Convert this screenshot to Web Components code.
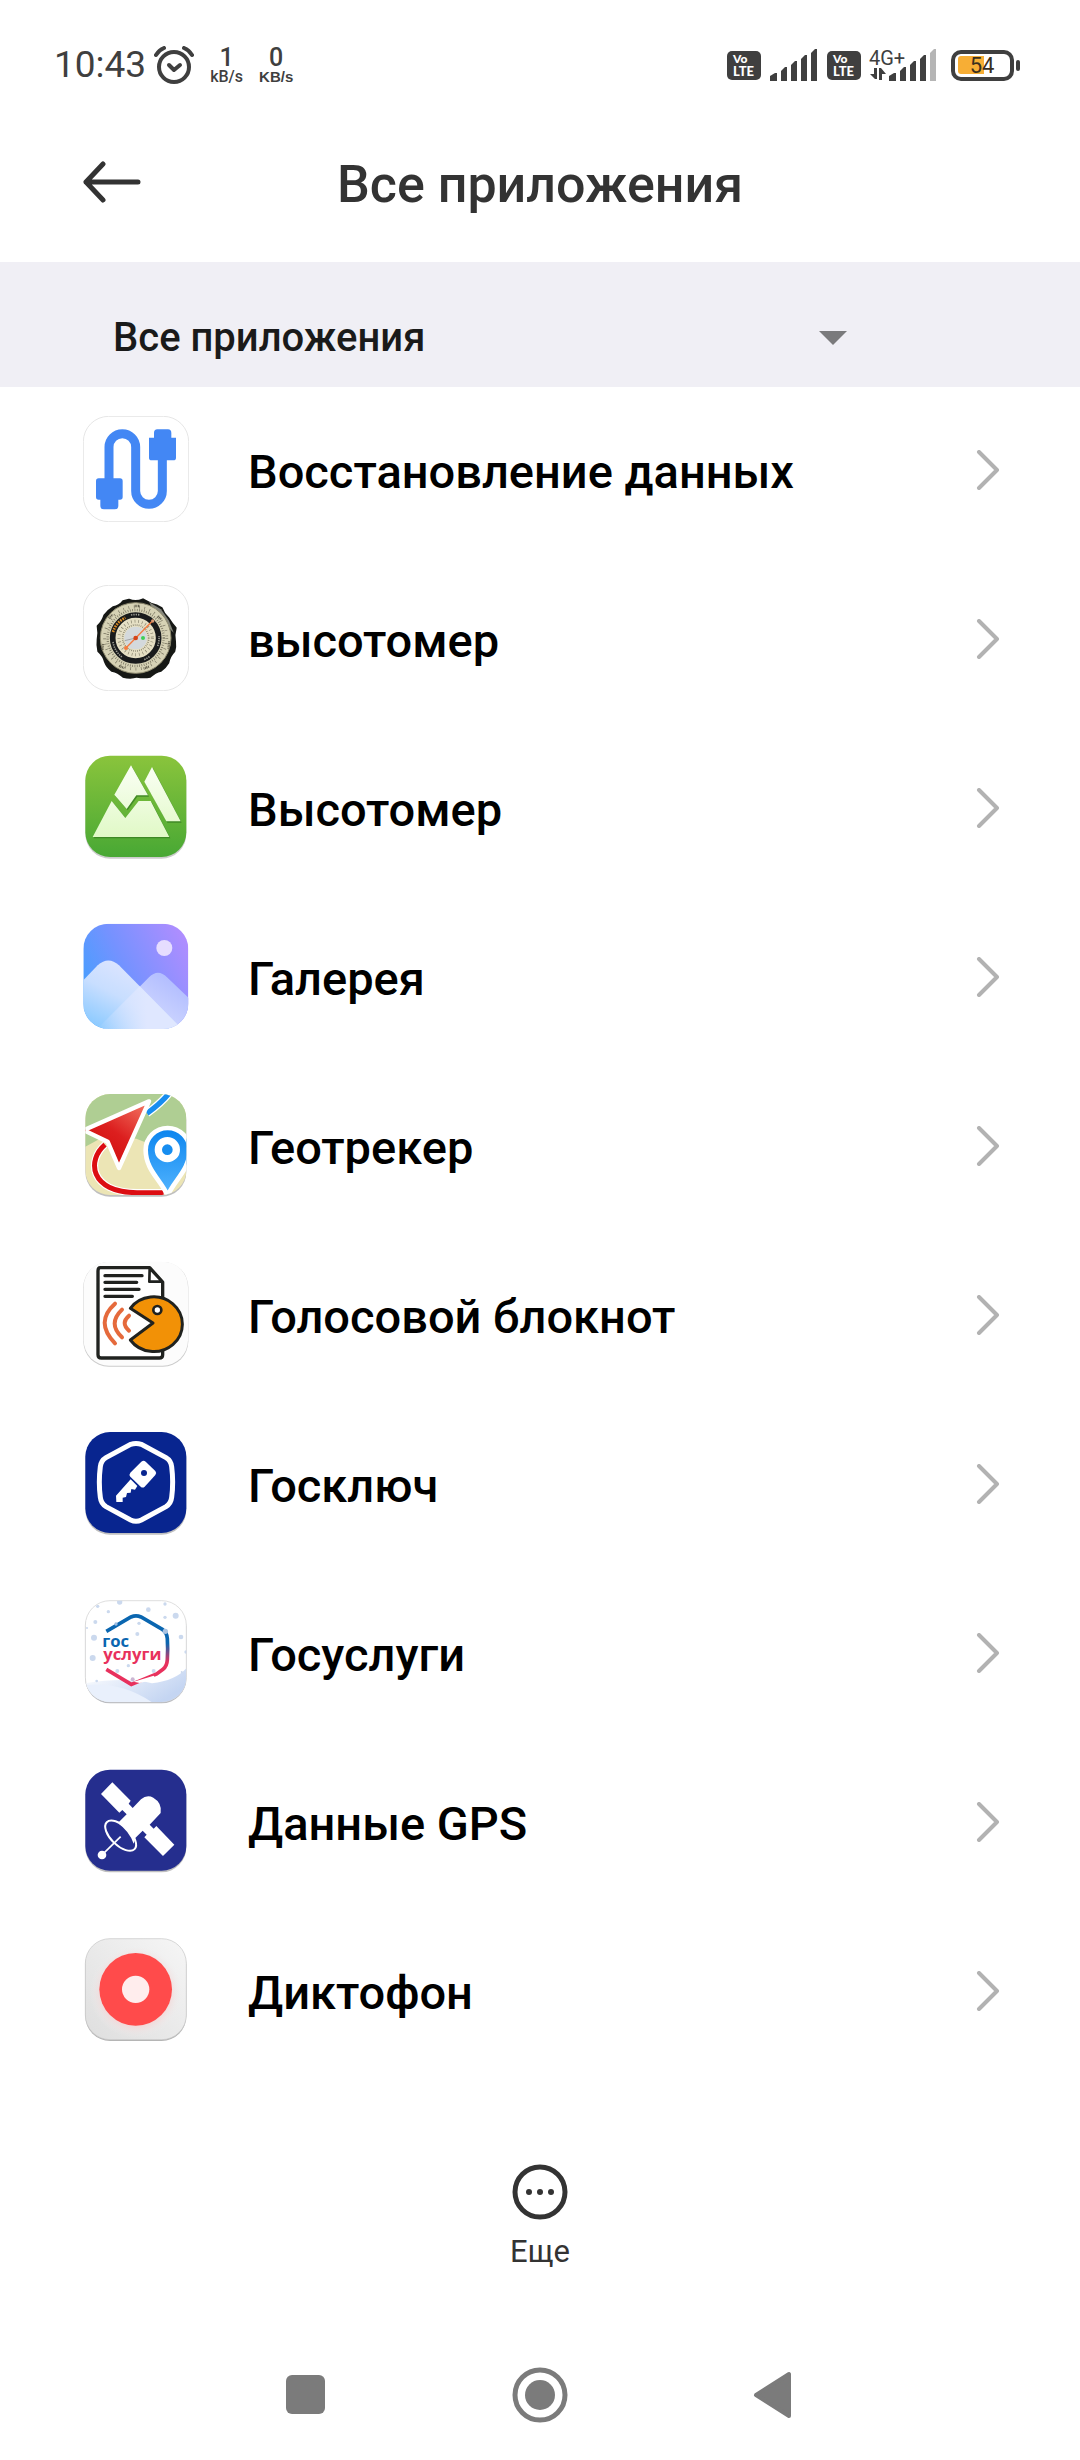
<!DOCTYPE html>
<html lang="ru">
<head>
<meta charset="UTF-8">
<meta name="viewport" content="width=device-width, initial-scale=1">
<title>Все приложения</title>
<style>
    body {
        margin: 0;
        background-color: #fff;
        font-family: Roboto, "Noto Sans", sans-serif;
    }
</style>
</head>
<body>

<app-screen>
    <status-bar slot="top" time="10:43"></status-bar>
    <page-header slot="top">Все приложения</page-header>
    <filter-bar slot="top"></filter-bar>

    <app-item>
        <svg slot="icon" viewBox="38 48 318 318" aria-hidden="true">
            <rect x="39" y="49" width="316" height="316" rx="76" fill="#fff" stroke="#e6e6e6" stroke-width="3"/>
            <path d="M116 240V141a40 40 0 0 1 80 0V273a40 40 0 0 0 80 0V175" fill="none" stroke="#4387f4" stroke-width="27"/>
            <path d="M85 235h64q8 0 8 8v48q0 8-8 8h-5v18q0 11-11 11h-32q-11 0-11-11v-18h-5q-8 0-8-8v-48q0-8 8-8z" fill="#4387f4"/>
            <path d="M261 88h32q10 0 10 11v14h14v60q0 8-8 8h-65q-8 0-8-8v-60h15v-14q0-11 10-11z" fill="#4387f4"/>
        </svg>
        Восстановление данных
    </app-item>

    <app-item>
        <svg slot="icon" viewBox="38 555 318 318" aria-hidden="true">
            <rect x="39" y="556" width="316" height="316" rx="76" fill="#fff" stroke="#e6e6e6" stroke-width="3"/>
            <path d="M176 599q20 8 42-1l24 13q18 4 32 13 6 18 20 30 10 16 22 30-6 20-2 40 2 16-2 30-14 14-18 34-10 16-22 24-18 4-32 18-20 4-40 0-20 6-42 0-14-14-34-18-14-10-20-26-4-18-20-32-4-20-2-36 4-20 0-40 14-12 20-32 10-14 26-24 20-4 30-18z" fill="#161815" stroke="#161815" stroke-width="6" stroke-linejoin="round"/>
            <path d="M236 606l36 22 24 34 14 36-30-30-26-30z" fill="#85867c"/>
            <circle cx="196" cy="714" r="106" fill="#d6d2b5" stroke="#8d896e" stroke-width="3"/>
            <circle cx="196" cy="714" r="93" fill="none" stroke="#77735f" stroke-width="9" stroke-dasharray="2 14"/>
            <circle cx="196" cy="714" r="84" fill="none" stroke="#6f6b58" stroke-width="7" stroke-dasharray="2 5"/>
            <circle cx="196" cy="714" r="69" fill="#e5dfc4" stroke="#191b1c" stroke-width="17"/>
            <path d="M128 696a70 70 0 0 1 37-43" fill="none" stroke="#d98b25" stroke-width="8" stroke-dasharray="5 3"/>
            <path d="M182 645a70 70 0 0 1 28 0M128 726a70 70 0 0 0 27 45M222 779a70 70 0 0 0 16-10M262 738a70 70 0 0 0 4-30" fill="none" stroke="#9c9c93" stroke-width="5" stroke-dasharray="4 3"/>
            <circle cx="196" cy="714" r="50" fill="none" stroke="#86826d" stroke-width="9" stroke-dasharray="2 9"/>
            <circle cx="196" cy="714" r="39" fill="none" stroke="#77735f" stroke-width="5" stroke-dasharray="2 4"/>
            <circle cx="196" cy="714" r="34" fill="#d4d9dc"/>
            <path d="M196 714l-33 8" stroke="#888" stroke-width="2"/>
            <path d="M166 745l78-80" stroke="#f47a3e" stroke-width="4"/>
            <circle cx="167" cy="744" r="6" fill="#f47a3e"/>
            <circle cx="247" cy="663" r="5" fill="#d99871"/>
            <circle cx="196" cy="714" r="7" fill="#d44418"/>
            <circle cx="218" cy="714" r="6" fill="#3ecf55"/>
            <path d="M193 618h16M115 654l12-10M262 649l12 10M98 732l-2 18M297 724l-3 22M146 798l16 6M236 800l-16 6" stroke="#605d4c" stroke-width="7" stroke-dasharray="3 2"/>
        </svg>
        высотомер
    </app-item>

    <app-item>
        <svg slot="icon" viewBox="38 42 318 318" aria-hidden="true">
            <defs>
                <linearGradient id="green" x1="0" y1="0" x2="0" y2="1"><stop stop-color="#8ac43c"/><stop offset="1" stop-color="#48a834"/></linearGradient>
                <linearGradient id="snow" gradientUnits="userSpaceOnUse" x1="0" y1="75" x2="0" y2="292"><stop stop-color="#fbfff5"/><stop offset="1" stop-color="#e0f9c6"/></linearGradient>
            </defs>
            <rect x="45" y="52" width="303" height="304" rx="74" fill="#000" opacity=".2"/>
            <rect x="45" y="47" width="303" height="304" rx="74" fill="url(#green)"/>
            <g fill="#388022" opacity=".8" transform="translate(3 4)">
                <path d="M182 76l51 90h-35l-29 41-37-43z"/><path d="M245 81l86 163h-43L222 125z"/><path d="M124 183l41 51 40-51h36l56 108H67z"/>
            </g>
            <g fill="url(#snow)">
                <path d="M182 76l51 90h-35l-29 41-37-43z"/><path d="M245 81l86 163h-43L222 125z"/><path d="M124 183l41 51 40-51h36l56 108H67z"/>
            </g>
        </svg>
        Высотомер
    </app-item>

    <app-item>
        <svg slot="icon" viewBox="38 549 318 318" aria-hidden="true">
            <defs>
                <linearGradient id="sky" x1="0" y1=".6" x2="1" y2=".1"><stop stop-color="#479efe"/><stop offset=".4" stop-color="#7592ff"/><stop offset="1" stop-color="#b38dff"/></linearGradient>
                <linearGradient id="hillFront" x1="0" y1="1" x2=".6" y2=".2"><stop stop-color="#7fc6ff"/><stop offset=".6" stop-color="#c8deff"/><stop offset="1" stop-color="#dbe4ff"/></linearGradient>
                <linearGradient id="hillBack" x1="0" y1="1" x2="1" y2="0"><stop stop-color="#e5ebff"/><stop offset="1" stop-color="#a9b5ff"/></linearGradient>
                <linearGradient id="hillMist" x1="0" y1="0" x2="1" y2="0"><stop stop-color="#dfe7ff" stop-opacity="0"/><stop offset=".6" stop-color="#dfe7ff"/></linearGradient>
                <clipPath id="galleryClip"><rect x="39" y="551" width="315" height="316" rx="76"/></clipPath>
            </defs>
            <g clip-path="url(#galleryClip)">
                <path d="M39 551h315v316H39z" fill="url(#sky)"/>
                <path d="M100 850L236 712q27-27 54 0l66 63v92H100z" fill="url(#hillBack)"/>
                <path d="M39 721l43-45q32-29 64 0l174 176 10 15H39z" fill="url(#hillFront)"/>
                <path d="M80 867l128-128 112 113 10 15z" fill="url(#hillMist)"/>
                <circle cx="282" cy="624" r="24" fill="#e6ddff"/>
            </g>
        </svg>
        Галерея
    </app-item>

    <app-item>
        <svg slot="icon" viewBox="38 36 318 318" aria-hidden="true">
            <defs>
                <linearGradient id="arrowRed" x1="1" y1="0" x2=".3" y2="1"><stop stop-color="#f47b67"/><stop offset=".55" stop-color="#dc1f1f"/><stop offset="1" stop-color="#d00a0a"/></linearGradient>
                <linearGradient id="pinBlue" x1="0" y1="0" x2="0" y2="1"><stop stop-color="#0a84ee"/><stop offset="1" stop-color="#54b5ff"/></linearGradient>
                <clipPath id="trackerClip"><rect x="45" y="42" width="303" height="303" rx="74"/></clipPath>
            </defs>
            <rect x="45" y="47" width="303" height="303" rx="74" fill="#000" opacity=".25"/>
            <g clip-path="url(#trackerClip)">
                <path d="M45 42h303v303H45z" fill="#ece5b5"/>
                <path d="M45 42h303v160l-100-6-50-20-90-10-63 34z" fill="#afce93"/>
                <path d="M296 40q-24 30-66 60" fill="none" stroke="#fff" stroke-width="24"/>
                <path d="M296 40q-24 30-66 60" fill="none" stroke="#168df0" stroke-width="16"/>
                <path d="M104 194C50 240 56 337 200 338h80" fill="none" stroke="#fff" stroke-width="22"/>
                <path d="M104 194C50 240 56 337 200 338h80" fill="none" stroke="#dc0d12" stroke-width="15"/>
                <path d="M236 64L40 151l72 34 34 79z" fill="url(#arrowRed)" stroke="#fff" stroke-width="13" stroke-linejoin="round"/>
                <path d="M292 347C272 300 226 270 226 210a66 66 0 0 1 132 0c0 60-46 90-66 137z" fill="url(#pinBlue)" stroke="#fff" stroke-width="14"/>
                <circle cx="291" cy="209" r="27" fill="#168df0" stroke="#fff" stroke-width="22"/>
            </g>
        </svg>
        Геотрекер
    </app-item>

    <app-item>
        <svg slot="icon" viewBox="38 543 318 318" aria-hidden="true">
            <rect x="39" y="546" width="315" height="314" rx="76" fill="#ccc"/>
            <rect x="40" y="545" width="313" height="312" rx="76" fill="#fcfcfc"/>
            <path d="M90 563h148l39 43v218q0 10-10 10H93q-10 0-10-10V573q0-10 7-10z" fill="#fff" stroke="#20221f" stroke-width="10" stroke-linejoin="round"/>
            <path d="M238 565l-1 40h38z" fill="#fff" stroke="#20221f" stroke-width="8" stroke-linejoin="round"/>
            <path d="M104 587h111M104 607h95M104 628h102M104 649h82" stroke="#20221f" stroke-width="10" stroke-linecap="round"/>
            <path d="M180 685a86 82 0 1 1 0 95l68-51z" fill="#f29106" stroke="#20221f" stroke-width="9" stroke-linejoin="round"/>
            <circle cx="261" cy="690" r="12" fill="#fff" stroke="#20221f" stroke-width="8"/>
            <path d="M134 671q-62 55 0 119M155 689q-44 42 0 83M176 707q-26 22 0 45" fill="none" stroke="#e56a3c" stroke-width="12" stroke-linecap="round"/>
        </svg>
        Голосовой блокнот
    </app-item>

    <app-item>
        <svg slot="icon" viewBox="38 30 318 318" aria-hidden="true">
            <rect x="45" y="41" width="303" height="303" rx="74" fill="#000" opacity=".25"/>
            <rect x="45" y="36" width="303" height="303" rx="74" fill="#08258f"/>
            <path d="M181 73q16-5 32 0l74 40q15 9 17 27 6 47 0 92-2 19-17 28l-74 40q-16 8-32 0l-74-40q-15-9-17-28-6-45 0-92 2-18 17-27z" fill="none" stroke="#fff" stroke-width="15"/>
            <path d="M213 125q7-5 13 0l29 28q5 6 0 12l-32 35q-6 5-12 0l-31-30q-5-6 0-12z" fill="#fff"/>
            <path d="M181 178l20 20-7 11-11-2-2 11-11 1-3 12-10 2 0 13h-19l-1-19z" fill="#fff"/>
            <circle cx="221" cy="159" r="9" fill="#08258f"/>
        </svg>
        Госключ
    </app-item>

    <app-item>
        <svg slot="icon" viewBox="38 537 318 318" aria-hidden="true">
            <defs>
                <linearGradient id="ring" x1="0" y1="0" x2="0" y2="1"><stop offset=".4" stop-color="#0a66b0"/><stop offset=".68" stop-color="#e8315d"/></linearGradient>
                <linearGradient id="drift" x1="0" y1="0" x2="1" y2=".5"><stop stop-color="#fff"/><stop offset="1" stop-color="#c4d5f2"/></linearGradient>
                <clipPath id="snowClip"><rect x="45" y="542" width="303" height="304" rx="74"/></clipPath>
            </defs>
            <rect x="45" y="546" width="303" height="304" rx="74" fill="#b9bbc0"/>
            <rect x="45" y="542" width="303" height="304" rx="74" fill="#fff" stroke="#cfcfcf" stroke-width="2"/>
            <g clip-path="url(#snowClip)">
                <path d="M45 790q120-20 200 0 70-8 103-45v101H45z" fill="url(#drift)"/>
                <path d="M45 795q110-10 200 52H45z" fill="#e9f0fc"/>
                <g fill="#cbd9ee">
                    <circle cx="148" cy="546" r="8"/><circle cx="82" cy="559" r="5"/><circle cx="114" cy="575" r="5"/><circle cx="234" cy="569" r="7"/><circle cx="284" cy="552" r="5"/><circle cx="316" cy="587" r="9"/><circle cx="75" cy="606" r="6"/><circle cx="284" cy="592" r="5"/><circle cx="71" cy="653" r="9"/><circle cx="332" cy="651" r="7"/><circle cx="67" cy="714" r="9"/><circle cx="201" cy="642" r="6"/><circle cx="347" cy="696" r="5"/><circle cx="141" cy="753" r="6"/><circle cx="174" cy="737" r="5"/><circle cx="250" cy="753" r="6"/><circle cx="79" cy="783" r="4"/><circle cx="334" cy="756" r="3"/><circle cx="50" cy="624" r="3"/>
                </g>
            </g>
            <path d="M108 634l74-43q15-7 30 0l64 37q14 9 15 28 2 31 0 63-1 20-13 29l-19 14-76 31-75-45" fill="none" stroke="url(#ring)" stroke-width="11"/>
            <path d="M190 785l60-18 8 10-50 12z" fill="#fff"/>
            <circle cx="285" cy="634" r="8" fill="#a9c3e2"/>
            <circle cx="137" cy="612" r="5" fill="#9bbbe0"/>
            <circle cx="206" cy="610" r="5" fill="#c9d8ed"/>
            <circle cx="187" cy="778" r="6" fill="#cbb6d3"/>
            <g font-family="Open Sans, Noto Sans, sans-serif" font-weight="700" font-size="50">
                <text x="96" y="681" fill="#0a66b0">гос</text>
                <text x="99" y="721" fill="#e8315d">услуги</text>
            </g>
        </svg>
        Госуслуги
    </app-item>

    <app-item>
        <svg slot="icon" viewBox="38 24 318 318" aria-hidden="true">
            <rect x="45" y="34" width="303" height="303" rx="74" fill="#000" opacity=".25"/>
            <rect x="45" y="29" width="303" height="303" rx="74" fill="#252e8e"/>
            <path d="M126 67l55 55-6 9 12 13 25-26q18-16 37-5 27 16 22 46l-33 35 12 12 8-8 54 56-34 34-56-56 7-8-12-12-26 26q-20 8-40-14-13-14-9-34l27-27-13-13-9 8-55-56z" fill="#fff"/>
            <ellipse cx="151" cy="227" rx="58" ry="29" transform="rotate(44 151 227)" fill="#252e8e" stroke="#fff" stroke-width="6"/>
            <path d="M143 190q38 6 52 47l-5 14q-14-38-47-61z" fill="#fff"/>
            <path d="M96 284l55-54" stroke="#fff" stroke-width="5"/>
            <circle cx="95" cy="285" r="13" fill="#fff"/>
        </svg>
        Данные GPS
    </app-item>

    <app-item>
        <svg slot="icon" viewBox="38 531 318 318" aria-hidden="true">
            <defs>
                <linearGradient id="metal" x1="0" y1="1" x2="1" y2="0"><stop stop-color="#dedede"/><stop offset="1" stop-color="#f6f6f6"/></linearGradient>
                <radialGradient id="glow"><stop offset=".7" stop-color="#f5d4d4"/><stop offset="1" stop-color="#eee" stop-opacity="0"/></radialGradient>
            </defs>
            <rect x="45" y="539" width="303" height="304" rx="74" fill="#b4b4b4"/>
            <rect x="45" y="536" width="303" height="303" rx="74" fill="url(#metal)" stroke="#c6c6c6" stroke-width="2"/>
            <circle cx="196" cy="696" r="138" fill="url(#glow)"/>
            <circle cx="196" cy="688" r="109" fill="#ff4b4b"/>
            <circle cx="196" cy="688" r="41" fill="#ffeded"/>
        </svg>
        Диктофон
    </app-item>

    <more-button slot="bottom">Еще</more-button>
    <nav-bar slot="bottom"></nav-bar>
</app-screen>

<script>
class AppScreen extends HTMLElement {
    constructor() {
        super();
        this.shadow = this.attachShadow({mode: 'open'});
    }

    connectedCallback() {
        this.shadow.innerHTML =
        `
        <style>
            :host {
                display: flex;
                flex-direction: column;
                min-height: 100vh;
            }

            footer {
                display: flex;
                flex-direction: column;
                margin-top: auto;
            }
        </style>
        <header><slot name="top"></slot></header>
        <main role="list"><slot></slot></main>
        <footer><slot name="bottom"></slot></footer>
        `;
    }
}

class StatusBar extends HTMLElement {
    constructor() {
        super();
        this.shadow = this.attachShadow({mode: 'open'});
    }

    volte() {
        return `
        <svg width="34" height="30" viewBox="0 0 34 30" role="img" aria-label="VoLTE">
            <rect width="34" height="29" y="1" rx="5" fill="#3f3f3f"/>
            <g fill="#fff" font-family="Lato, sans-serif" font-weight="900">
                <text x="6" y="13" font-size="12">Vo</text>
                <text x="6" y="26" font-size="13">LTE</text>
            </g>
        </svg>`;
    }

    signal(lastColor) {
        return `
        <svg width="48" height="32" viewBox="0 0 48 32" aria-hidden="true">
            <g fill="#3f3f3f">
                <path d="M0 27l5-3h2v8H0z"/>
                <path d="M11 22l4-4h2v14h-6z"/>
                <path d="M21 16l4-4h2v20h-6z"/>
                <path d="M31 10l4-4h2v26h-6z"/>
                <path d="M41 4l4-4h2v32h-6z" fill="${lastColor}"/>
            </g>
        </svg>`;
    }

    connectedCallback() {
        this.shadow.innerHTML =
        `
        <style>
            :host {
                box-sizing: border-box;
                display: flex;
                align-items: center;
                justify-content: space-between;
                height: 108px;
                padding: 22px 59px 0 54px;
                color: #3f3f3f;
            }

            .group {
                display: flex;
                align-items: center;
            }

            .time {
                font-size: 37px;
                line-height: 40px;
            }

            .left {
                gap: 8px;
            }

            .right {
                gap: 9px;
            }

            .speed {
                display: flex;
                flex-direction: column;
                align-items: center;
                margin-left: 8px;
                font-size: 25px;
                font-weight: 500;
                line-height: 22px;
            }

            .speed small {
                font-size: 16px;
                line-height: 15px;
            }

            .speed .bold {
                font: 700 15px/15px "Liberation Sans", sans-serif;
            }

            .mobile {
                display: flex;
                align-items: flex-end;
                margin: 0 5px 0 -1px;
            }

            .network {
                display: flex;
                flex-direction: column;
                width: 20px;
                font-size: 20px;
                line-height: 18px;
                white-space: nowrap;
            }
        </style>
        <div class="group left">
            <span class="time">${this.getAttribute('time')}</span>
            <svg width="40" height="38" viewBox="0 0 40 38" fill="none" stroke="#3f3f3f" stroke-linecap="round" aria-hidden="true">
                <circle cx="20" cy="21" r="15" stroke-width="4"/>
                <path d="M2 9q3-5 8-7M38 9q-3-5-8-7" stroke-width="4"/>
                <path d="M15 19l5 5 6-5" stroke-width="4" stroke-linejoin="round"/>
            </svg>
            <div class="speed">1<small>kB/s</small></div>
            <div class="speed">0<small class="bold">KB/s</small></div>
        </div>
        <div class="group right">
            ${this.volte()}
            ${this.signal('#3f3f3f')}
            ${this.volte()}
            <div class="mobile">
                <div class="network">
                    4G+
                    <svg width="18" height="14" viewBox="0 0 18 14" fill="#3f3f3f" aria-hidden="true">
                        <path d="M5 1h3v11H6L1 7h4zM10 1h2l5 6h-4v6h-3z"/>
                    </svg>
                </div>
                ${this.signal('#b5b5b5')}
            </div>
            <svg width="70" height="32" viewBox="0 0 70 32" role="img" aria-label="54%">
                <rect x="2" y="3" width="59" height="27" rx="8" fill="none" stroke="#3f3f3f" stroke-width="4"/>
                <path d="M10 7h23v18H10q-3 0-3-3V10q0-3 3-3z" fill="#f7ae35"/>
                <path d="M67 13v7" stroke="#3f3f3f" stroke-width="4" stroke-linecap="round"/>
                <text x="31" y="24" text-anchor="middle" font-size="22" fill="#3a2f1d">54</text>
            </svg>
        </div>
        `;
    }
}

class PageHeader extends HTMLElement {
    constructor() {
        super();
        this.shadow = this.attachShadow({mode: 'open'});
    }

    connectedCallback() {
        this.shadow.innerHTML =
        `
        <style>
            :host {
                display: grid;
                grid-template-columns: 60px 1fr 60px;
                align-items: center;
                height: 154px;
                padding: 0 82px;
                color: #333;
            }

            button {
                padding: 0;
                border: none;
                background: none;
                cursor: pointer;
            }

            svg {
                display: block;
            }

            h1 {
                margin: 0;
                font-size: 52px;
                font-weight: 500;
                line-height: 60px;
                text-align: center;
            }
        </style>
        <button aria-label="Назад">
            <svg width="60" height="48" viewBox="0 0 60 48" fill="none" stroke="#333" stroke-width="5" stroke-linecap="round" stroke-linejoin="round">
                <path d="M56 21H4M21 3L4 21l17 18"/>
            </svg>
        </button>
        <h1><slot></slot></h1>
        `;
    }
}

class FilterBar extends HTMLElement {
    constructor() {
        super();
        this.shadow = this.attachShadow({mode: 'open'});
    }

    connectedCallback() {
        this.shadow.innerHTML =
        `
        <style>
            :host {
                box-sizing: border-box;
                display: grid;
                align-items: center;
                height: 125px;
                padding: 26px 232px 0 113px;
                background-color: #f0eff5;
            }

            select {
                grid-area: 1 / 1;
                appearance: none;
                width: 100%;
                padding: 0;
                border: none;
                background: none;
                color: #1a1a1a;
                font: inherit;
                font-size: 40px;
                font-weight: 500;
                line-height: 48px;
            }

            svg {
                grid-area: 1 / 1;
                justify-self: end;
                pointer-events: none;
            }
        </style>
        <select aria-label="Фильтр">
            <option>Все приложения</option>
        </select>
        <svg width="30" height="14" viewBox="0 0 30 14" aria-hidden="true"><path d="M1 0h28L15 14z" fill="#7a7a7c"/></svg>
        `;
    }
}

class AppItem extends HTMLElement {
    constructor() {
        super();
        this.shadow = this.attachShadow({mode: 'open'});
    }

    connectedCallback() {
        this.setAttribute('role', 'listitem');
        this.shadow.innerHTML =
        `
        <style>
            :host {
                display: block;
            }

            a {
                box-sizing: border-box;
                display: flex;
                align-items: center;
                height: 169px;
                padding: 0 80px 4px 83px;
                color: #000;
                text-decoration: none;
            }

            ::slotted(svg) {
                display: block;
                width: 106px;
                height: 106px;
                margin-bottom: 2px;
            }

            .label {
                flex: 1;
                padding: 4px 0 0 59px;
                font-size: 47px;
                font-weight: 500;
                line-height: 54px;
            }
        </style>
        <a href="#">
            <slot name="icon"></slot>
            <span class="label"><slot></slot></span>
            <svg width="24" height="40" viewBox="0 0 24 40" fill="none" stroke="#b2b2b2" stroke-width="4" stroke-linecap="round" stroke-linejoin="round" aria-hidden="true">
                <path d="M3 2l18 18L3 38"/>
            </svg>
        </a>
        `;
    }
}

class MoreButton extends HTMLElement {
    constructor() {
        super();
        this.shadow = this.attachShadow({mode: 'open'});
    }

    connectedCallback() {
        this.shadow.innerHTML =
        `
        <style>
            :host {
                display: flex;
                justify-content: center;
                padding-bottom: 60px;
            }

            button {
                display: flex;
                flex-direction: column;
                align-items: center;
                gap: 14px;
                padding: 0;
                border: none;
                background: none;
                color: #333;
                cursor: pointer;
                font: inherit;
                font-size: 31px;
                line-height: 36px;
            }
        </style>
        <button>
            <svg width="56" height="56" viewBox="0 0 56 56" fill="#333" aria-hidden="true">
                <circle cx="28" cy="28" r="25" fill="none" stroke="#333" stroke-width="5"/>
                <circle cx="17" cy="28" r="3"/>
                <circle cx="28" cy="28" r="3"/>
                <circle cx="39" cy="28" r="3"/>
            </svg>
            <slot></slot>
        </button>
        `;
    }
}

class NavBar extends HTMLElement {
    constructor() {
        super();
        this.shadow = this.attachShadow({mode: 'open'});
    }

    connectedCallback() {
        this.shadow.innerHTML =
        `
        <style>
            :host {
                display: flex;
                align-items: center;
                justify-content: center;
                gap: 178px;
                height: 130px;
            }

            button {
                padding: 0;
                border: none;
                background: none;
                cursor: pointer;
            }

            svg {
                display: block;
                fill: #7b7b7b;
            }
        </style>
        <button aria-label="Недавние">
            <svg width="56" height="56" viewBox="0 0 56 56"><rect x="8" y="8" width="39" height="39" rx="6"/></svg>
        </button>
        <button aria-label="Домой">
            <svg width="56" height="56" viewBox="0 0 56 56">
                <circle cx="28" cy="28" r="25" fill="none" stroke="#7b7b7b" stroke-width="5"/>
                <circle cx="28" cy="28" r="15"/>
            </svg>
        </button>
        <button aria-label="Назад">
            <svg width="56" height="56" viewBox="0 0 56 56"><path d="M10 28L43 7v42z" stroke="#7b7b7b" stroke-width="4" stroke-linejoin="round"/></svg>
        </button>
        `;
    }
}

customElements.define('app-screen', AppScreen);
customElements.define('status-bar', StatusBar);
customElements.define('page-header', PageHeader);
customElements.define('filter-bar', FilterBar);
customElements.define('app-item', AppItem);
customElements.define('more-button', MoreButton);
customElements.define('nav-bar', NavBar);
</script>
</body>
</html>
